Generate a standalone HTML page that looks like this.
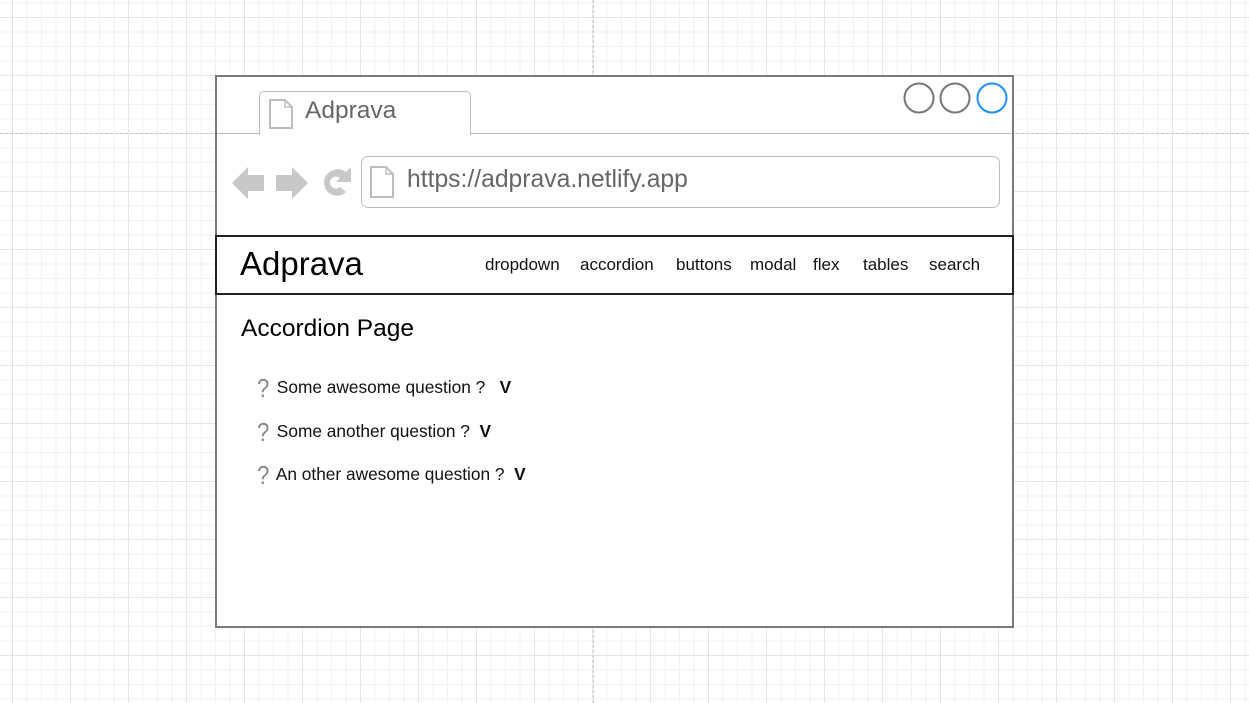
<!DOCTYPE html>
<html><head><meta charset="utf-8"><style>
html,body{margin:0;padding:0}
body{width:1249px;height:703px;position:relative;overflow:hidden;font-family:"Liberation Sans",Arial,sans-serif;
background-color:#fff;
background-image:
linear-gradient(to right,#e6e6e6 1px,transparent 1px),
linear-gradient(to bottom,#e6e6e6 1px,transparent 1px),
linear-gradient(to right,#f2f2f2 1px,transparent 1px),
linear-gradient(to bottom,#f2f2f2 1px,transparent 1px);
background-size:58px 58px,58px 58px,14.5px 14.5px,14.5px 14.5px;
background-position:12px 0,0 17px,12px 0,0 17px;}
.a{position:absolute}
.t{position:absolute;white-space:nowrap}
.q{color:#888;font-size:26px;vertical-align:-4px;display:inline-block;width:15px;transform:scaleX(0.85);transform-origin:left}
</style></head><body>
<div class="a" style="left:0;top:133px;width:1249px;border-top:1px dashed #c8c8c8"></div>
<div class="a" style="left:593px;top:0;height:703px;border-left:1px dashed #c8c8c8"></div>
<div class="a" style="left:215px;top:75px;width:795px;height:549px;background:#fff;border:2px solid #7a7a7a"></div>
<div class="a" style="left:217px;top:133px;width:794px;border-top:1px solid #bdbdbd"></div>
<div class="a" style="left:259px;top:91px;width:210px;height:43px;background:#fff;border:1px solid #bdbdbd;border-bottom:none;border-radius:5px 5px 0 0"></div>
<svg class="a" style="left:268px;top:98px" width="26" height="32"><path d="M2 2h15l7 7v21H2z" fill="#fff" stroke="#bdbdbd" stroke-width="2"/><path d="M17 2v7h7" fill="none" stroke="#bdbdbd" stroke-width="1.5"/></svg>
<div class="t" style="left:305px;top:97px;font-size:24.5px;color:#666">Adprava</div>
<svg class="a" style="left:902px;top:82px" width="110" height="34"><circle cx="17" cy="16" r="14.5" fill="none" stroke="#777" stroke-width="2"/><circle cx="53" cy="16" r="14.5" fill="none" stroke="#777" stroke-width="2"/><circle cx="90" cy="16" r="14.5" fill="none" stroke="#1e90ff" stroke-width="2"/></svg>
<svg class="a" style="left:230px;top:164px" width="125" height="38" fill="#c8c8c8"><path d="M2 19L18 3v8h16v16H18v8z"/><path d="M78 19L62 3v8H46v16h16v8z"/><path d="M104 6a13 13 0 1 0 12 22l-6-5a6 6 0 1 1 0-9l-4 4h15V3l-5 5a13 13 0 0 0-12-2z"/></svg>
<div class="a" style="left:361px;top:156px;width:637px;height:50px;border:1px solid #bdbdbd;border-radius:7px;background:#fff"></div>
<svg class="a" style="left:369px;top:165px" width="26" height="34"><path d="M2 2h15l7 7v23H2z" fill="#fff" stroke="#bdbdbd" stroke-width="2"/><path d="M17 2v7h7" fill="none" stroke="#bdbdbd" stroke-width="1.5"/></svg>
<div class="t" style="left:407px;top:166px;font-size:24.7px;color:#666">https://adprava.netlify.app</div>
<div class="a" style="left:215px;top:235px;width:795px;height:56px;border:2px solid #222;background:#fff"></div>
<div class="t" style="left:240px;top:245px;font-size:33px;color:#000">Adprava</div>
<div class="t" style="left:485px;top:255px;font-size:17px;color:#111">dropdown</div>
<div class="t" style="left:580px;top:255px;font-size:17px;color:#111">accordion</div>
<div class="t" style="left:676px;top:255px;font-size:17px;color:#111">buttons</div>
<div class="t" style="left:750px;top:255px;font-size:17px;color:#111">modal</div>
<div class="t" style="left:813px;top:255px;font-size:17px;color:#111">flex</div>
<div class="t" style="left:863px;top:255px;font-size:17px;color:#111">tables</div>
<div class="t" style="left:929px;top:255px;font-size:17px;color:#111">search</div>
<div class="t" style="left:241px;top:315px;font-size:24.5px;color:#000">Accordion Page</div>
<div class="t" style="left:257px;top:373px;font-size:17.3px;color:#111"><span class="q">?</span> Some awesome question ? &nbsp; <b>V</b></div>
<div class="t" style="left:257px;top:417px;font-size:17.3px;color:#111"><span class="q">?</span> Some another question ? &nbsp;<b>V</b></div>
<div class="t" style="left:257px;top:460px;font-size:17.3px;color:#111"><span class="q">?</span> An other awesome question ? &nbsp;<b>V</b></div>
</body></html>
